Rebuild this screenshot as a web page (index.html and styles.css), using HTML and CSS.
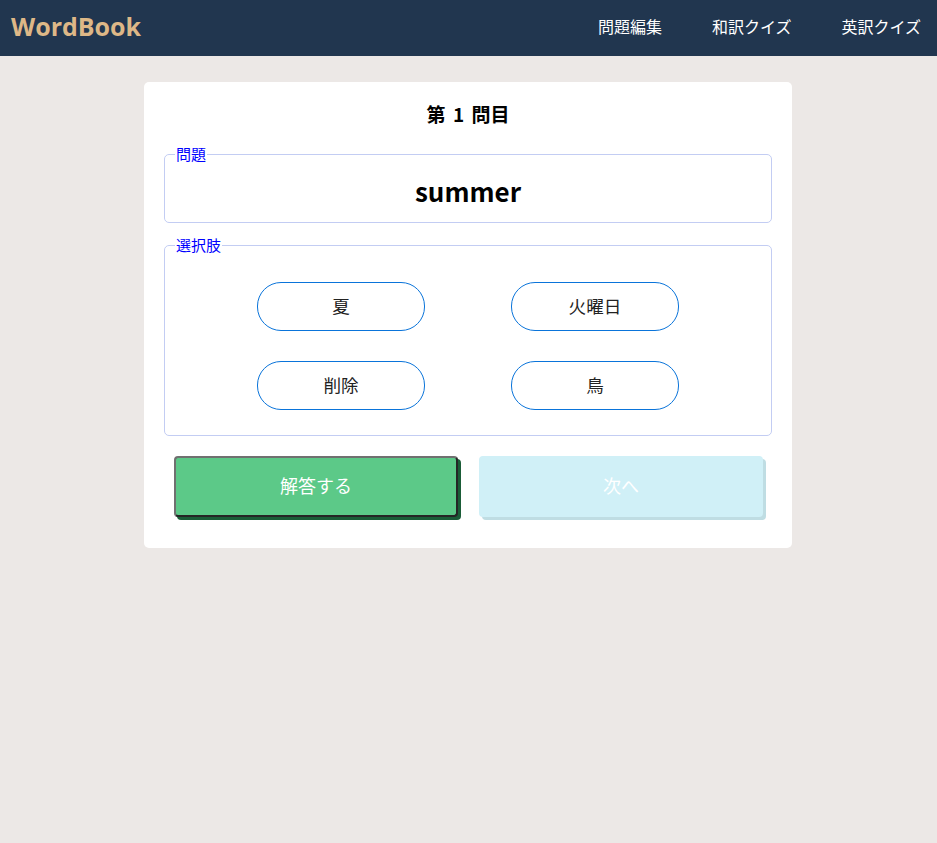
FILE: index.html
```html
<!DOCTYPE html>
<html lang="ja">
<head>
<meta charset="utf-8">
<title>WordBook</title>
<link rel="stylesheet" href="styles.css">
</head>
<body>
<header class="header">
  <div class="logo">WordBook</div>
  <nav class="nav">
    <a class="nav-item">問題編集</a>
    <a class="nav-item">和訳クイズ</a>
    <a class="nav-item">英訳クイズ</a>
  </nav>
</header>
<main class="main">
  <section class="card">
    <h2 class="title">第 1 問目</h2>
    <fieldset class="box question">
      <legend class="legend">問題</legend>
      <div class="word">summer</div>
    </fieldset>
    <fieldset class="box choices">
      <legend class="legend">選択肢</legend>
      <div class="grid">
        <button class="choice">夏</button>
        <button class="choice">火曜日</button>
        <button class="choice">削除</button>
        <button class="choice">鳥</button>
      </div>
    </fieldset>
    <div class="actions">
      <button class="act answer">解答する</button>
      <button class="act next" disabled>次へ</button>
    </div>
  </section>
</main>
</body>
</html>
```
FILE: styles.css
```css
* { box-sizing: border-box; }
html, body { margin: 0; padding: 0; }
body {
  background: #ece8e6;
  font-family: "Noto Sans CJK JP", "Noto Sans", sans-serif;
  height: 843px;
}
.header {
  height: 56px;
  background: #21364f;
  display: flex;
  align-items: center;
  justify-content: space-between;
  padding: 0 16px 5px 11px;
}
.logo {
  color: #deb887;
  font-family: "Open Sans", "Noto Sans", sans-serif;
  font-weight: 700;
  font-size: 25px;
}
.nav { display: flex; gap: 50px; }
.nav-item {
  color: #fff;
  font-size: 16px;
}
.main {
  padding-top: 26px;
  padding-left: 144px;
}
.card {
  width: 648px;
  background: #fff;
  border-radius: 5px;
  padding: 19px 20px 31px;
}
.title {
  margin: 0 0 18px;
  text-align: center;
  font-size: 19px;
  word-spacing: 3px;
  font-weight: 700;
  line-height: 26px;
}
.box {
  margin: 0;
  border: 1px solid #c3cdf3;
  border-radius: 5px;
  padding: 0 10px;
}
.legend {
  color: #0000ff;
  font-size: 15px;
  line-height: 18px;
  padding: 0 1px;
}
.question { padding-bottom: 14px; }
.word {
  text-align: center;
  font-size: 26px;
  font-weight: 700;
  line-height: 34px;
  margin-top: 11px;
}
.choices { margin-top: 13px; padding-top: 28px; padding-bottom: 25px; }
.grid {
  display: grid;
  grid-template-columns: 168px 168px;
  column-gap: 86px;
  row-gap: 30px;
  justify-content: center;
}
.choice {
  height: 49px;
  padding-bottom: 3px;
  border: 1px solid #0a74da;
  border-radius: 24px;
  background: #fff;
  font-family: inherit;
  font-size: 17.6px;
  color: #222;
}
.actions {
  display: flex;
  gap: 21px;
  padding: 0 10px;
  margin-top: 20px;
}
.act {
  flex: 0 0 284px;
  height: 61px;
  padding-bottom: 5px;
  border-radius: 4px;
  font-family: inherit;
  font-size: 18px;
  color: #fff;
}
.answer {
  background: #5cc988;
  border: 2px solid;
  border-color: #707070 #252525 #252525 #707070;
  box-shadow: 3px 3px 0 #1a5c37;
}
.next {
  background: #d0f0f7;
  border: 2px solid #d0f0f7;
  box-shadow: 3px 3px 0 #bfdde3;
}
```
